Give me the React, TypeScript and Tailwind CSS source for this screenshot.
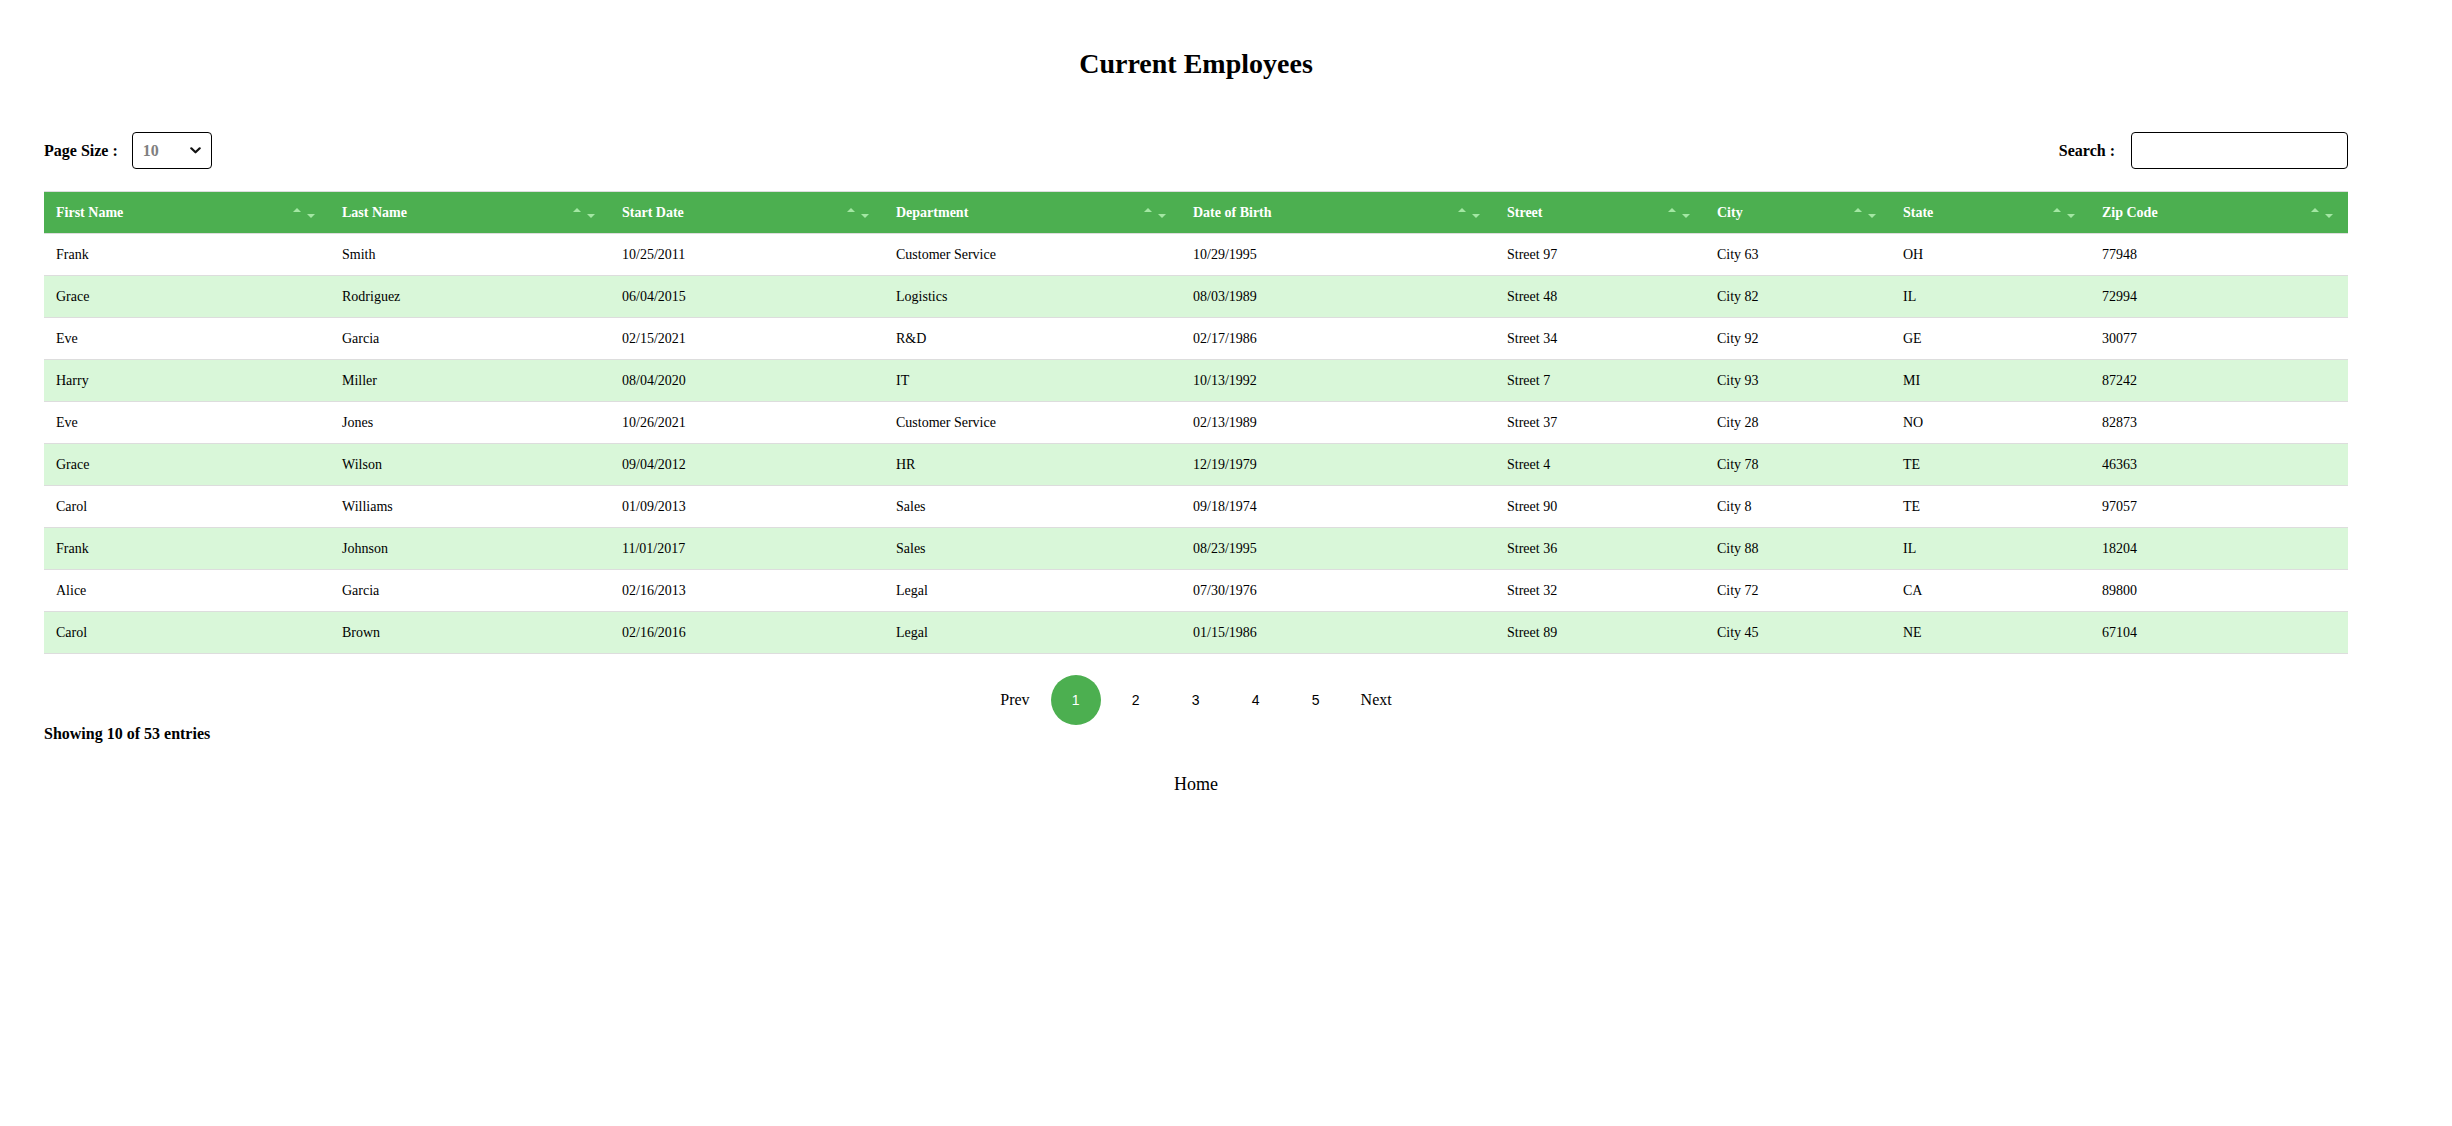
import React from 'react';

interface Employee {
  firstName: string;
  lastName: string;
  startDate: string;
  department: string;
  dateOfBirth: string;
  street: string;
  city: string;
  state: string;
  zipCode: string;
}

const columns = [
  { key: 'firstName', label: 'First Name', width: 'w-[286px]' },
  { key: 'lastName', label: 'Last Name', width: 'w-[280px]' },
  { key: 'startDate', label: 'Start Date', width: 'w-[274px]' },
  { key: 'department', label: 'Department', width: 'w-[297px]' },
  { key: 'dateOfBirth', label: 'Date of Birth', width: 'w-[314px]' },
  { key: 'street', label: 'Street', width: 'w-[210px]' },
  { key: 'city', label: 'City', width: 'w-[186px]' },
  { key: 'state', label: 'State', width: 'w-[199px]' },
  { key: 'zipCode', label: 'Zip Code', width: 'w-[258px]' },
] as const;

const employees: Employee[] = [
  { firstName: 'Frank', lastName: 'Smith', startDate: '10/25/2011', department: 'Customer Service', dateOfBirth: '10/29/1995', street: 'Street 97', city: 'City 63', state: 'OH', zipCode: '77948' },
  { firstName: 'Grace', lastName: 'Rodriguez', startDate: '06/04/2015', department: 'Logistics', dateOfBirth: '08/03/1989', street: 'Street 48', city: 'City 82', state: 'IL', zipCode: '72994' },
  { firstName: 'Eve', lastName: 'Garcia', startDate: '02/15/2021', department: 'R&D', dateOfBirth: '02/17/1986', street: 'Street 34', city: 'City 92', state: 'GE', zipCode: '30077' },
  { firstName: 'Harry', lastName: 'Miller', startDate: '08/04/2020', department: 'IT', dateOfBirth: '10/13/1992', street: 'Street 7', city: 'City 93', state: 'MI', zipCode: '87242' },
  { firstName: 'Eve', lastName: 'Jones', startDate: '10/26/2021', department: 'Customer Service', dateOfBirth: '02/13/1989', street: 'Street 37', city: 'City 28', state: 'NO', zipCode: '82873' },
  { firstName: 'Grace', lastName: 'Wilson', startDate: '09/04/2012', department: 'HR', dateOfBirth: '12/19/1979', street: 'Street 4', city: 'City 78', state: 'TE', zipCode: '46363' },
  { firstName: 'Carol', lastName: 'Williams', startDate: '01/09/2013', department: 'Sales', dateOfBirth: '09/18/1974', street: 'Street 90', city: 'City 8', state: 'TE', zipCode: '97057' },
  { firstName: 'Frank', lastName: 'Johnson', startDate: '11/01/2017', department: 'Sales', dateOfBirth: '08/23/1995', street: 'Street 36', city: 'City 88', state: 'IL', zipCode: '18204' },
  { firstName: 'Alice', lastName: 'Garcia', startDate: '02/16/2013', department: 'Legal', dateOfBirth: '07/30/1976', street: 'Street 32', city: 'City 72', state: 'CA', zipCode: '89800' },
  { firstName: 'Carol', lastName: 'Brown', startDate: '02/16/2016', department: 'Legal', dateOfBirth: '01/15/1986', street: 'Street 89', city: 'City 45', state: 'NE', zipCode: '67104' },
];

const SortIcons: React.FC = () => (
  <span className="flex items-start gap-[6px] mr-[3px]">
    <span className="w-0 h-0 border-l-[4px] border-r-[4px] border-b-[4px] border-l-transparent border-r-transparent border-b-[#a3e7a3]" />
    <span className="w-0 h-0 mt-[6px] border-l-[4px] border-r-[4px] border-t-[4px] border-l-transparent border-r-transparent border-t-[#a3e7a3]" />
  </span>
);

const App: React.FC = () => {
  return (
    <div className="min-h-screen bg-white text-black font-['Liberation_Serif','Times_New_Roman',serif]">
      <div className="ml-[44px] w-[2304px] pt-[48px]">
        <h1 className="text-center text-[28px] leading-[32px] font-bold">Current Employees</h1>

        {/* --- Controls --- */}
        <div className="mt-[52px] flex items-center justify-between h-[37px]">
          <div className="flex items-center">
            <label className="text-[16px] font-bold mr-[14px]">Page Size :</label>
            <div className="relative w-[80px] h-[37px]">
              <select
                defaultValue="10"
                className="appearance-none w-full h-full border border-black rounded-[4px] pl-[10px] text-[16px] font-bold text-[#808080] bg-white outline-none"
              >
                <option value="10">10</option>
                <option value="25">25</option>
                <option value="50">50</option>
                <option value="100">100</option>
              </select>
              <svg className="absolute right-[11px] top-[15px] w-[11px] h-[7px] pointer-events-none" viewBox="0 0 11 7" fill="none">
                <path d="M1.3 1.3 L5.5 5.3 L9.7 1.3" stroke="#111" strokeWidth="2.2" strokeLinecap="round" strokeLinejoin="round" />
              </svg>
            </div>
          </div>
          <div className="flex items-center">
            <label className="text-[16px] font-bold mr-[16px]">Search :</label>
            <input type="text" className="w-[217px] h-[37px] border border-black rounded-[4px] px-2 text-[14px] outline-none" />
          </div>
        </div>

        {/* --- Table --- */}
        <table className="mt-[22px] w-[2304px] table-fixed border-collapse text-[14px]">
          <colgroup>
            {columns.map((col) => (
              <col key={col.key} className={col.width} />
            ))}
          </colgroup>
          <thead>
            <tr className="bg-[#4caf50] border-t border-b border-[#dddddd]">
              {columns.map((col) => (
                <th key={col.key} className="h-[42px] pl-[12px] pr-[12px] text-left font-bold text-white">
                  <div className="flex items-center justify-between">
                    <span>{col.label}</span>
                    <SortIcons />
                  </div>
                </th>
              ))}
            </tr>
          </thead>
          <tbody>
            {employees.map((emp, i) => (
              <tr key={i} className={`border-b border-[#dddddd] ${i % 2 === 1 ? 'bg-[#d9f7d9]' : 'bg-white'}`}>
                {columns.map((col) => (
                  <td key={col.key} className="h-[42px] px-[12px] text-left">
                    {emp[col.key]}
                  </td>
                ))}
              </tr>
            ))}
          </tbody>
        </table>

        {/* --- Pagination --- */}
        <div className="mt-[21px] flex items-center justify-center h-[50px]">
          <button className="text-[16px] mr-[21px]">Prev</button>
          <div className="flex items-center gap-[10px]">
            {[1, 2, 3, 4, 5].map((n) => (
              <button
                key={n}
                className={`w-[50px] h-[50px] rounded-full text-[14px] font-['Liberation_Sans',Arial,sans-serif] ${n === 1 ? 'bg-[#4caf50] text-white' : 'text-black'}`}
              >
                {n}
              </button>
            ))}
          </div>
          <button className="text-[16px] ml-[20px]">Next</button>
        </div>

        <p className="text-[16px] font-bold leading-[18px]">Showing 10 of 53 entries</p>

        <div className="mt-[30px] text-center">
          <a href="#" className="text-[18px] leading-[21px]">Home</a>
        </div>
      </div>
    </div>
  );
};

export default App;
